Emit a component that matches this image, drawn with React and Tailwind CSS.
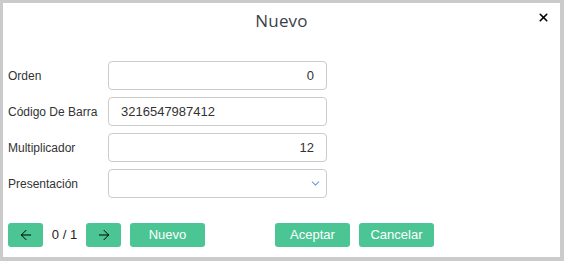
import React from 'react';
import { ArrowLeft, ArrowRight, ChevronDown, X } from 'lucide-react';

const fields = [
  { label: 'Orden', value: '0', align: 'text-right' },
  { label: 'Código De Barra', value: '3216547987412', align: 'text-left' },
  { label: 'Multiplicador', value: '12', align: 'text-right' },
];

export default function App() {
  return (
    <div className="w-[564px] h-[261px] bg-white border-t-[3px] border-l-[3px] border-r-[4px] border-b-[4px] border-[#cbcbcb] relative font-['Liberation_Sans',Arial,sans-serif] text-[#222]">
      <div className="h-[35px] flex items-center justify-center">
        <span className="font-['Open_Sans',sans-serif] text-[17px] text-[#3a3f4a] tracking-[0.2px]">Nuevo</span>
      </div>
      <button className="absolute right-[10px] top-[8px] text-black"><X size={13} strokeWidth={3} /></button>

      <div className="pt-[23px] pl-[5px] flex flex-col gap-[7px]">
        {fields.map(f => (
          <div key={f.label} className="flex items-center h-[29px]">
            <label className="w-[100px] text-[12px] text-[#333]">{f.label}</label>
            <div className={`w-[219px] h-[29px] border border-[#cccccc] rounded-[4px] px-[12px] flex items-center text-[13px] text-[#333] ${f.align === 'text-right' ? 'justify-end' : 'justify-start'}`}>
              {f.value}
            </div>
          </div>
        ))}
        <div className="flex items-center h-[29px]">
          <label className="w-[100px] text-[12px] text-[#333]">Presentación</label>
          <div className="w-[219px] h-[29px] border border-[#cccccc] rounded-[4px] pr-[4px] flex items-center justify-end">
            <ChevronDown size={13} strokeWidth={2} className="text-[#6a9fdc]" />
          </div>
        </div>
      </div>

      <div className="mt-[25px] pl-[5px] flex items-center h-[24px] text-[13px]">
        <button className="w-[35px] h-[24px] rounded-[3px] bg-[#4cc594] flex items-center justify-center text-black"><ArrowLeft size={16} strokeWidth={1.5} /></button>
        <span className="w-[43px] text-center text-[#222]">0 / 1</span>
        <button className="w-[35px] h-[24px] rounded-[3px] bg-[#4cc594] flex items-center justify-center text-black"><ArrowRight size={16} strokeWidth={1.5} /></button>
        <button className="ml-[9px] w-[75px] h-[24px] rounded-[3px] bg-[#4cc594] text-white">Nuevo</button>
        <button className="ml-[70px] w-[75px] h-[24px] rounded-[3px] bg-[#4cc594] text-white">Aceptar</button>
        <button className="ml-[9px] w-[75px] h-[24px] rounded-[3px] bg-[#4cc594] text-white">Cancelar</button>
      </div>
    </div>
  );
}
